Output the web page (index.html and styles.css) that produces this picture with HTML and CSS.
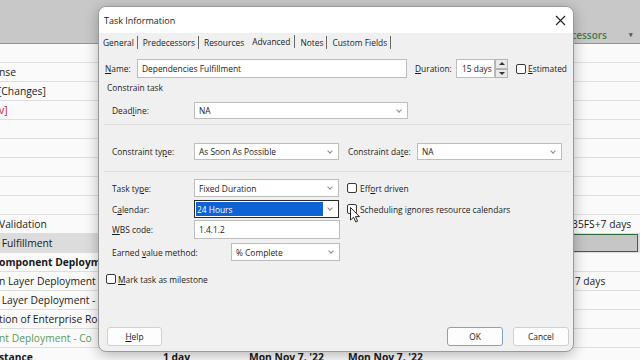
FILE: index.html
```html
<!DOCTYPE html>
<html lang="en">
<head>
    <meta charset="UTF-8">
    <meta name="viewport" content="width=device-width, initial-scale=1.0">
    <title>Task Information</title>
    <link rel="stylesheet" href="styles.css">
</head>
<body>
    <div class="sheet">
        <div class="sheet-head">
            <div class="pred-head">Predecessors <span class="head-arrow">&#9662;</span></div>
        </div>
        <div class="rows">
            <div class="row"><span class="cell name"></span></div>
            <div class="row"><span class="cell name">nse</span></div>
            <div class="row"><span class="cell name cut">[Changes]</span></div>
            <div class="row"><span class="cell name red">v]</span></div>
            <div class="row"></div>
            <div class="row"></div>
            <div class="row"></div>
            <div class="row"></div>
            <div class="row"></div>
            <div class="row">
                <span class="cell name">Validation</span><span class="cell"></span><span class="cell"></span><span class="cell"></span>
                <span class="cell pred">35FS+7 days</span>
            </div>
            <div class="row selected">
                <span class="cell name"> Fulfillment</span><span class="cell"></span><span class="cell"></span><span class="cell"></span>
                <span class="cell pred active-cell"></span>
            </div>
            <div class="row bold"><span class="cell name">omponent Deploym</span></div>
            <div class="row">
                <span class="cell name">n Layer Deployment</span><span class="cell"></span><span class="cell"></span><span class="cell"></span>
                <span class="cell pred"> 7 days</span>
            </div>
            <div class="row"><span class="cell name"> Layer Deployment -</span></div>
            <div class="row"><span class="cell name">tion of Enterprise Ro</span></div>
            <div class="row"><span class="cell name green">nt Deployment - Co</span></div>
            <div class="row bold">
                <span class="cell name">stance</span>
                <span class="cell">1 day</span>
                <span class="cell">Mon Nov 7, '22</span>
                <span class="cell">Mon Nov 7, '22</span>
            </div>
        </div>
    </div>

    <div class="dialog">
        <div class="titlebar">
            <span class="title">Task Information</span>
            <svg class="close" width="11" height="11" viewBox="0 0 11 11">
                <path d="M1 1 L10 10 M10 1 L1 10" stroke="#222" stroke-width="1.1" fill="none"/>
            </svg>
        </div>
        <div class="tabs">
            <span class="tab first">General</span>
            <span class="tab">Predecessors</span>
            <span class="tab no-sep">Resources</span>
            <span class="tab active">Advanced</span>
            <span class="tab">Notes</span>
            <span class="tab">Custom Fields</span>
        </div>

        <div class="pane">
            <div class="line name-line">
                <label class="lbl name-lbl"><u>N</u>ame:</label>
                <div class="field name-field">Dependencies Fulfillment</div>
                <label class="lbl dur-lbl"><u>D</u>uration:</label>
                <div class="field dur-field">15 days</div>
                <div class="spin">
                    <span class="spin-btn"><span class="tri-up"></span></span>
                    <span class="spin-btn"><span class="tri-down"></span></span>
                </div>
                <span class="check est-check"></span>
                <span class="check-text"><u>E</u>stimated</span>
            </div>

            <div class="group-title">Constrain task</div>

            <div class="line deadline-line">
                <label class="lbl">Dead<u>l</u>ine:</label>
                <div class="field select deadline">NA<span class="chev"></span></div>
            </div>

            <div class="rule rule-one"></div>

            <div class="line constraint-line">
                <label class="lbl">Constraint ty<u>p</u>e:</label>
                <div class="field select half">As Soon As Possible<span class="chev"></span></div>
                <label class="lbl date-lbl">Constraint da<u>t</u>e:</label>
                <div class="field select half">NA<span class="chev"></span></div>
            </div>

            <div class="rule rule-two"></div>

            <div class="line task-line">
                <label class="lbl">Task ty<u>p</u>e:</label>
                <div class="field select half">Fixed Duration<span class="chev"></span></div>
                <span class="check side-check"></span>
                <span class="check-text">Eff<u>o</u>rt driven</span>
            </div>

            <div class="line calendar-line">
                <label class="lbl">C<u>a</u>lendar:</label>
                <div class="field select half focused">
                    <span class="highlight">24 Hours</span><span class="chev"></span>
                </div>
                <span class="check side-check"></span>
                <span class="check-text">Scheduling ignores resource calendars</span>
            </div>

            <div class="line wbs-line">
                <label class="lbl"><u>W</u>BS code:</label>
                <div class="field wbs-field">1.4.1.2</div>
            </div>

            <div class="line evm-line">
                <label class="lbl evm-lbl">Earned <u>v</u>alue method:</label>
                <div class="field select evm-field">% Complete<span class="chev"></span></div>
            </div>

            <div class="line milestone-line">
                <span class="check"></span>
                <span class="check-text"><u>M</u>ark task as milestone</span>
            </div>

            <div class="footer">
                <button class="btn help-btn"><u>H</u>elp</button>
                <span class="spacer"></span>
                <button class="btn ok-btn">OK</button>
                <button class="btn">Cancel</button>
            </div>
        </div>
    </div>

    <svg class="cursor" width="11" height="17" viewBox="0 0 11 17">
        <path d="M0.5 0.5 L0.5 13 L3.6 10.2 L5.8 15 L7.6 14.2 L5.5 9.6 L9.5 9.6 Z" fill="#fff" stroke="#111" stroke-width="0.9" stroke-linejoin="round"/>
    </svg>
</body>
</html>
```

FILE: styles.css
```css
body, html {
    margin: 0;
    padding: 0;
    width: 640px;
    height: 360px;
    overflow: hidden;
    font-family: "Open Sans", "Noto Sans", sans-serif;
    background-color: #fafafa;
    color: #1b1b1b;
}
body {
    position: relative;
}

/* sheet behind the dialog */
.sheet-head {
    height: 43px;
    background-color: #c8c8c8;
    border-bottom: 1px solid #8e9a90;
    display: grid;
    grid-template-columns: 565px 73px 1fr;
    align-items: end;
}
.pred-head {
    grid-column: 2;
    height: 17px;
    margin-left: -22px;
    display: flex;
    align-items: center;
    gap: 22px;
    font-size: 10px;
    font-weight: 600;
    color: #3e7b4a;
    white-space: nowrap;
}
.head-arrow {
    font-size: 7px;
    color: #555;
}
.row {
    display: grid;
    grid-template-columns: 160px 86px 99px 220px 73px 1fr;
    height: 19px;
    box-sizing: border-box;
    border-bottom: 1px solid #dedede;
    font-size: 10.3px;
    align-items: center;
    white-space: pre;
}
.row.bold {
    font-weight: 700;
}
.cell {
    overflow: hidden;
    padding-left: 3px;
}
.cell.name {
    padding-left: 0;
    margin-left: -1px;
}
.cell.cut {
    margin-left: -2px;
}
.red {
    color: #c0231b;
}
.green {
    color: #5a9a5e;
}
.pred {
    grid-column: 5;
    padding-left: 7px;
}
.row.selected {
    background-color: #dcdcdc;
}
.active-cell {
    align-self: stretch;
    background-color: #c6c6c6;
    border: 1px solid #2d6a3a;
}

/* dialog */
.dialog {
    position: absolute;
    left: 98px;
    top: 6px;
    width: 476px;
    height: 346px;
    box-sizing: border-box;
    border: 1px solid #9a9a9a;
    border-radius: 8px;
    background-color: #f0f0f0;
    box-shadow: 0 3px 14px rgba(0, 0, 0, 0.28);
    display: flex;
    flex-direction: column;
    overflow: hidden;
    font-size: 8.4px;
}
.titlebar {
    height: 26px;
    background-color: #fff;
    display: flex;
    align-items: center;
    justify-content: space-between;
    padding: 0 7px 0 5px;
}
.title {
    font-size: 9px;
    color: #1a1a1a;
}
.tabs {
    height: 18px;
    display: flex;
    align-items: center;
}
.tab {
    padding: 0 3px 0 5px;
    border-right: 1px solid #6a6a6a;
    line-height: 13px;
}
.tab.first {
    padding-left: 4px;
}
.tab.no-sep {
    border-right: none;
    padding-right: 8px;
}
.tab.active {
    position: relative;
    top: -1px;
    padding-left: 0;
    padding-right: 4px;
}

.pane {
    flex: 1;
    display: flex;
    flex-direction: column;
    padding: 8px 4px 5px 6px;
}
.line {
    display: flex;
    align-items: center;
    flex-shrink: 0;
}
.lbl {
    width: 82px;
    flex-shrink: 0;
    white-space: nowrap;
}
u {
    text-decoration-thickness: 1px;
    text-underline-offset: 1px;
}
.field {
    height: 100%;
    box-sizing: border-box;
    border: 1px solid #bdbdbd;
    background-color: #fff;
    display: flex;
    align-items: center;
    padding-left: 4px;
    white-space: nowrap;
    flex-shrink: 0;
}
.select {
    justify-content: space-between;
}
.chev {
    width: 3px;
    height: 3px;
    border-right: 1px solid #8a8a8a;
    border-bottom: 1px solid #8a8a8a;
    transform: rotate(45deg);
    margin: 0 6px 2px 0;
}

.name-line {
    height: 19px;
}
.name-lbl {
    width: 32px;
}
.name-field {
    width: 270px;
}
.dur-lbl {
    width: 41px;
    margin-left: 8px;
}
.dur-field {
    width: 39px;
    padding-left: 5px;
}
.spin {
    width: 13px;
    height: 100%;
    display: flex;
    flex-direction: column;
}
.spin-btn {
    flex: 1;
    box-sizing: border-box;
    border: 1px solid #b4b4b4;
    background-color: #e9e9e9;
    display: flex;
    align-items: center;
    justify-content: center;
}
.tri-up {
    border-left: 3px solid transparent;
    border-right: 3px solid transparent;
    border-bottom: 3px solid #333;
}
.tri-down {
    border-left: 3px solid transparent;
    border-right: 3px solid transparent;
    border-top: 3px solid #333;
}
.check {
    width: 10px;
    height: 10px;
    box-sizing: border-box;
    border: 1px solid #3a3a3a;
    border-radius: 2px;
    background-color: #fff;
    flex-shrink: 0;
}
.est-check {
    margin-left: 8px;
}
.check-text {
    margin-left: 2px;
    white-space: nowrap;
}

.group-title {
    margin-top: 4px;
    margin-left: 2px;
    height: 12px;
    line-height: 12px;
}
.deadline-line,
.constraint-line,
.task-line,
.calendar-line,
.wbs-line,
.evm-line {
    margin-left: 7px;
}
.deadline-line {
    margin-top: 8px;
    height: 17px;
}
.deadline {
    width: 214px;
}
.rule {
    height: 1px;
    width: 466px;
    margin-left: -1px;
    background-color: #dadada;
    flex-shrink: 0;
}
.rule-one {
    margin-top: 5px;
}
.constraint-line {
    margin-top: 18px;
    height: 17px;
}
.half {
    width: 145px;
}
.date-lbl {
    width: 69px;
    margin-left: 9px;
}
.rule-two {
    margin-top: 11px;
}
.task-line {
    margin-top: 7px;
    height: 18px;
}
.side-check {
    margin-left: 8px;
}
.side-check + .check-text {
    margin-left: 3px;
}
.calendar-line {
    margin-top: 3px;
    height: 18px;
}
.focused {
    border-color: #2b2b2b;
    padding-left: 1px;
}
.highlight {
    flex: 1;
    align-self: stretch;
    margin: 1px 0;
    padding-left: 1px;
    display: flex;
    align-items: center;
    background-color: #0d63d4;
    color: #fff;
}
.focused .chev {
    margin-left: 5px;
}
.wbs-line {
    margin-top: 2px;
    height: 19px;
}
.wbs-field {
    width: 146px;
}
.evm-line {
    margin-top: 4px;
    height: 18px;
}
.evm-lbl {
    width: 119px;
}
.evm-field {
    width: 109px;
}
.milestone-line {
    margin-top: 11px;
    height: 14px;
    margin-left: 1px;
}

.footer {
    margin-top: auto;
    display: flex;
    gap: 10px;
    padding-left: 2px;
}
.spacer {
    flex: 1;
}
.btn {
    width: 56px;
    height: 19px;
    box-sizing: border-box;
    border: 1px solid #d0d0d0;
    border-radius: 3px;
    background-color: #fdfdfd;
    font-family: inherit;
    font-size: 8.4px;
    color: #1b1b1b;
    padding: 0;
}
.help-btn {
    width: 55px;
}
.ok-btn {
    border-color: #7ba3d2;
}

.cursor {
    position: absolute;
    left: 350px;
    top: 207px;
}
```
